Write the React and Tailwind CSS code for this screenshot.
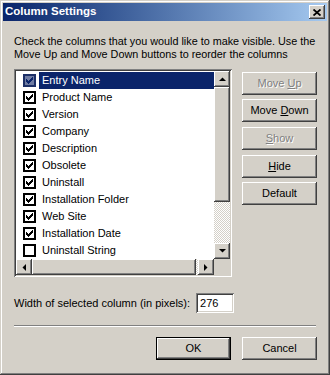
import React from "react";

const raised =
  "shadow-[inset_-1px_-1px_#404040,inset_1px_1px_#fff,inset_-2px_-2px_#808080,inset_2px_2px_#D4D0C8]";

const columns = [
  { name: "Entry Name", checked: true, selected: true },
  { name: "Product Name", checked: true },
  { name: "Version", checked: true },
  { name: "Company", checked: true },
  { name: "Description", checked: true },
  { name: "Obsolete", checked: true },
  { name: "Uninstall", checked: true },
  { name: "Installation Folder", checked: true },
  { name: "Web Site", checked: true },
  { name: "Installation Date", checked: true },
  { name: "Uninstall String", checked: false },
];

// pixel check mark, 7x7 inside the box
function CheckMark({ color }) {
  const cols = [
    [2, 3],
    [3, 3],
    [4, 3],
    [3, 3],
    [2, 3],
    [1, 3],
    [0, 3],
  ];
  return (
    <svg width="9" height="9" viewBox="0 0 9 9" shapeRendering="crispEdges">
      {cols.map(([y, h], i) => (
        <rect key={i} x={i + 1} y={y + 1} width="1" height={h} fill={color} />
      ))}
    </svg>
  );
}

function Checkbox({ checked, selected }) {
  return (
    <div
      className={
        "w-[13px] h-[13px] border-2 flex items-center justify-center shrink-0 " +
        (selected ? "border-[#1c2f66] bg-[#6f7ca3]" : "border-black bg-white")
      }
    >
      {checked && <CheckMark color={selected ? "#0A246A" : "#000"} />}
    </div>
  );
}

function Arrow({ dir }) {
  const pts = {
    up: "0,4 7,4 3.5,0.5",
    down: "0,0 7,0 3.5,3.5",
    left: "4,0 4,7 0.5,3.5",
    right: "0,0 0,7 3.5,3.5",
  }[dir];
  const vertical = dir === "up" || dir === "down";
  return (
    <svg width={vertical ? 7 : 4} height={vertical ? 4 : 7}>
      <polygon points={pts} fill="#000" />
    </svg>
  );
}

function ScrollButton({ dir }) {
  return (
    <div className={"w-4 h-4 bg-[#D4D0C8] flex items-center justify-center shrink-0 " + raised}>
      <Arrow dir={dir} />
    </div>
  );
}

function WinButton({ children, disabled, isDefault, className = "" }) {
  return (
    <button
      className={
        "w-[75px] h-[23px] bg-[#D4D0C8] flex items-center justify-center text-[11px] " +
        (isDefault
          ? "border border-black shadow-[inset_-1px_-1px_#404040,inset_1px_1px_#fff,inset_-2px_-2px_#808080] "
          : raised + " ") +
        (disabled ? "text-[#808080] [text-shadow:1px_1px_0_#fff] " : "text-black ") +
        className
      }
    >
      <span className="whitespace-pre">{children}</span>
    </button>
  );
}

export default function App() {
  return (
    <div className="w-[330px] h-[375px] bg-[#D4D0C8] p-[3px] flex flex-col font-['Liberation_Sans',Arial,sans-serif] text-[11px] text-black shadow-[inset_-1px_-1px_#404040,inset_1px_1px_#D4D0C8,inset_-2px_-2px_#808080,inset_2px_2px_#fff]">
      {/* title bar */}
      <div className="h-[18px] flex items-center justify-between pl-[2px] pr-[2px] bg-linear-to-r from-[#0A246A] to-[#A6CAF0]">
        <span className="text-white font-bold text-[11.5px] leading-none">Column Settings</span>
        <div className={"w-4 h-[14px] bg-[#D4D0C8] flex items-center justify-center " + raised}>
          <svg width="8" height="7" viewBox="0 0 8 7">
            <path d="M0.5 0.5 L7.5 6.5 M7.5 0.5 L0.5 6.5" stroke="#000" strokeWidth="1.8" />
          </svg>
        </div>
      </div>

      <div className="flex flex-col pl-[11px] pr-[10px]">
        <p className="mt-[14px] leading-[13px] whitespace-nowrap text-[10.8px]">
          Check the columns that you would like to make visible. Use the
          <br />
          Move Up and Move Down buttons to reorder the columns
        </p>

        <div className="flex mt-[8px]">
          {/* list view */}
          <div className="w-[218px] h-[208px] bg-white p-[2px] flex flex-col shadow-[inset_1px_1px_#808080,inset_-1px_-1px_#fff,inset_2px_2px_#404040,inset_-2px_-2px_#D4D0C8]">
            <div className="flex h-[188px]">
              <div className="flex-1 overflow-hidden pt-[1px]">
                {columns.map((c) => (
                  <div key={c.name} className="h-[17px] flex items-center pl-[7px]">
                    <Checkbox checked={c.checked} selected={c.selected} />
                    <div
                      className={
                        "ml-[3px] flex-1 h-[17px] pl-[3px] flex items-center leading-none " +
                        (c.selected ? "bg-[#0A246A] text-white" : "")
                      }
                    >
                      {c.name}
                    </div>
                  </div>
                ))}
                <div className="h-[17px] pl-[7px] pt-[1px]">
                  <div className="w-[13px] h-[13px] border-2 border-black bg-white"></div>
                </div>
              </div>
              <div className="w-4 flex flex-col">
                <ScrollButton dir="up" />
                <div className={"h-[115px] bg-[#D4D0C8] " + raised}></div>
                <div className="flex-1 bg-[image:repeating-conic-gradient(#fff_0_25%,#D4D0C8_0_50%)] bg-[length:2px_2px]"></div>
                <ScrollButton dir="down" />
              </div>
            </div>
            <div className="flex h-4">
              <ScrollButton dir="left" />
              <div className={"w-[164px] bg-[#D4D0C8] " + raised}></div>
              <div className="flex-1 bg-[image:repeating-conic-gradient(#fff_0_25%,#D4D0C8_0_50%)] bg-[length:2px_2px]"></div>
              <ScrollButton dir="right" />
              <div className="w-4 bg-[#D4D0C8]"></div>
            </div>
          </div>

          {/* side buttons */}
          <div className="flex flex-col ml-[10px] pt-[3px]">
            <WinButton disabled>
              Move <span className="underline">U</span>p
            </WinButton>
            <WinButton className="mt-[4px]">
              Move <span className="underline">D</span>own
            </WinButton>
            <WinButton disabled className="mt-[5px]">
              <span className="underline">S</span>how
            </WinButton>
            <WinButton className="mt-[5px]">
              <span className="underline">H</span>ide
            </WinButton>
            <WinButton className="mt-[4px]">Default</WinButton>
          </div>
        </div>

        <div className="flex items-center mt-[16px]">
          <span>Width of selected column (in pixels):</span>
          <div className="ml-[6px] w-[38px] h-[20px] bg-white pl-[4px] flex items-center shadow-[inset_1px_1px_#808080,inset_-1px_-1px_#fff,inset_2px_2px_#404040,inset_-2px_-2px_#D4D0C8]">
            276
          </div>
        </div>

        <div className="mt-[12px] w-[302px] h-[2px] border-t border-t-[#808080] border-b border-b-white"></div>

        <div className="flex justify-end gap-[11px] mt-[10px]">
          <WinButton isDefault>OK</WinButton>
          <WinButton>Cancel</WinButton>
        </div>
      </div>
    </div>
  );
}
